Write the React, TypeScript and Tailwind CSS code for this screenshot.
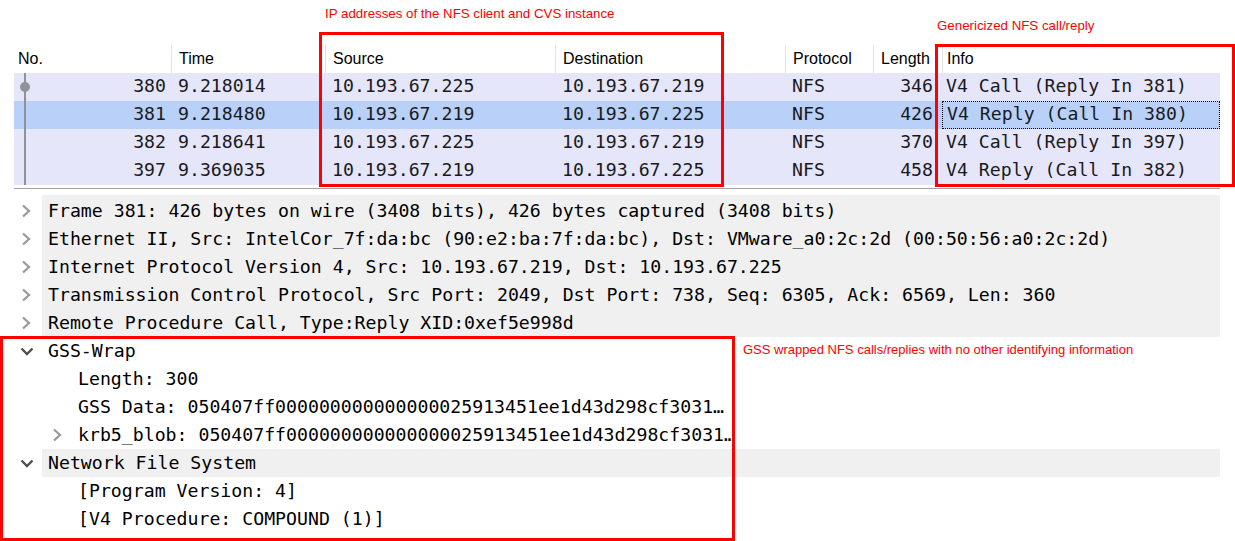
import React from "react";

type Pkt = {
  no: number;
  time: string;
  src: string;
  dst: string;
  proto: string;
  len: number;
  info: string;
  selected?: boolean;
};

const packets: Pkt[] = [
  { no: 380, time: "9.218014", src: "10.193.67.225", dst: "10.193.67.219", proto: "NFS", len: 346, info: "V4 Call (Reply In 381)" },
  { no: 381, time: "9.218480", src: "10.193.67.219", dst: "10.193.67.225", proto: "NFS", len: 426, info: "V4 Reply (Call In 380)", selected: true },
  { no: 382, time: "9.218641", src: "10.193.67.225", dst: "10.193.67.219", proto: "NFS", len: 370, info: "V4 Call (Reply In 397)" },
  { no: 397, time: "9.369035", src: "10.193.67.219", dst: "10.193.67.225", proto: "NFS", len: 458, info: "V4 Reply (Call In 382)" },
];

const GRID = "grid grid-cols-[157px_154px_230px_230px_88px_69px_278px]";

function Collapsed() {
  return (
    <svg width="10" height="14" viewBox="0 0 10 14" className="block">
      <polyline points="2,1.5 8,7 2,12.5" fill="none" stroke="#9a9a9a" strokeWidth="2.3" />
    </svg>
  );
}

function Expanded() {
  return (
    <svg width="14" height="9" viewBox="0 0 14 9" className="block">
      <polyline points="1.5,1.5 7,7 12.5,1.5" fill="none" stroke="#4f4f4f" strokeWidth="2.4" />
    </svg>
  );
}

type Det = {
  text: string;
  level: 0 | 1;
  state?: "open" | "closed";
  gray?: boolean;
  first?: boolean;
};

const details: Det[] = [
  { text: "Frame 381: 426 bytes on wire (3408 bits), 426 bytes captured (3408 bits)", level: 0, state: "closed", gray: true, first: true },
  { text: "Ethernet II, Src: IntelCor_7f:da:bc (90:e2:ba:7f:da:bc), Dst: VMware_a0:2c:2d (00:50:56:a0:2c:2d)", level: 0, state: "closed", gray: true },
  { text: "Internet Protocol Version 4, Src: 10.193.67.219, Dst: 10.193.67.225", level: 0, state: "closed", gray: true },
  { text: "Transmission Control Protocol, Src Port: 2049, Dst Port: 738, Seq: 6305, Ack: 6569, Len: 360", level: 0, state: "closed", gray: true },
  { text: "Remote Procedure Call, Type:Reply XID:0xef5e998d", level: 0, state: "closed", gray: true },
  { text: "GSS-Wrap", level: 0, state: "open" },
  { text: "Length: 300", level: 1 },
  { text: "GSS Data: 050407ff000000000000000025913451ee1d43d298cf3031…", level: 1 },
  { text: "krb5_blob: 050407ff000000000000000025913451ee1d43d298cf3031…", level: 1, state: "closed" },
  { text: "Network File System", level: 0, state: "open", gray: true },
  { text: "[Program Version: 4]", level: 1 },
  { text: "[V4 Procedure: COMPOUND (1)]", level: 1 },
];

export default function App() {
  return (
    <div className="relative w-[1235px] h-[541px] overflow-hidden bg-white font-['Liberation_Sans',Arial,sans-serif]">
      {/* top annotation space */}
      <div className="h-[43px]" />

      {/* packet list */}
      <div className="ml-[14px] w-[1206px]">
        <div className={`${GRID} h-[30px] pt-[2px] text-[16px] text-black`}>
          <div className="h-[28px] flex items-center pl-[4px]">No.</div>
          <div className="h-[28px] flex items-center pl-[7px] border-l border-[#e3e3e3]">Time</div>
          <div className="h-[28px] flex items-center pl-[7px] border-l border-[#e3e3e3]">Source</div>
          <div className="h-[28px] flex items-center pl-[7px] border-l border-[#e3e3e3]">Destination</div>
          <div className="h-[28px] flex items-center pl-[7px] border-l border-[#e3e3e3]">Protocol</div>
          <div className="h-[28px] flex items-center pl-[7px] border-l border-[#e3e3e3]">Length</div>
          <div className="h-[28px] flex items-center pl-[4px] border-l border-[#e3e3e3]">Info</div>
        </div>
        <div className="font-['DejaVu_Sans_Mono','Liberation_Mono',monospace] text-[18.2px] text-[#1a1a1a]">
          {packets.map((p, i) => (
            <div
              key={p.no}
              className={`${GRID} h-[28px] leading-[26px] whitespace-pre ${p.selected ? "bg-[#b9d1f8]" : "bg-[#e6e6fa]"}`}
            >
              <div className="relative text-right pr-[5px]">
                <span className="absolute left-[10px] top-0 h-[28px] w-[2px] bg-[#8e9399]" />
                {i === 0 && (
                  <span className="absolute left-[6px] top-[9px] w-[10px] h-[10px] rounded-full bg-[#8e9399]" />
                )}
                {p.no}
              </div>
              <div className="pl-[7px]">{p.time}</div>
              <div className="pl-[7px]">{p.src}</div>
              <div className="pl-[7px]">{p.dst}</div>
              <div className="pl-[7px]">{p.proto}</div>
              <div className="text-right pr-[9px]">{p.len}</div>
              <div className={`pl-[4px] ${p.selected ? "border border-dotted border-black leading-[24px] pl-[3px]" : ""}`}>
                {p.info}
              </div>
            </div>
          ))}
        </div>
        {/* splitter */}
        <div className="h-[3px]" />
        <div className="h-px bg-[#a3a3a3]" />
        <div className="h-[6px]" />
      </div>

      {/* packet details */}
      <div className="ml-[14px] w-[1206px] font-['DejaVu_Sans_Mono','Liberation_Mono',monospace] text-[18.2px] text-black">
        {details.map((d, i) => (
          <div key={i} className={`flex ${d.first ? "h-[30px]" : "h-[28px]"}`}>
            <div className={`w-[28px] flex items-center ${d.first ? "pt-[2px]" : ""} ${d.state === "open" ? "pl-[6px]" : "pl-[7px]"}`}>
              {d.level === 0 && d.state === "closed" && <Collapsed />}
              {d.level === 0 && d.state === "open" && <Expanded />}
            </div>
            <div
              className={`flex-1 flex items-center whitespace-pre ${d.first ? "pt-[2px]" : ""} ${d.gray ? "bg-[#f0f0f0]" : ""} ${d.level === 0 ? "pl-[6px]" : "pl-[10px]"}`}
            >
              {d.level === 1 && (
                <span className="w-[26px] flex items-center">
                  {d.state === "closed" ? <Collapsed /> : null}
                </span>
              )}
              {d.text}
            </div>
          </div>
        ))}
      </div>

      {/* annotations overlay */}
      <div className="absolute left-[319px] top-[32px] w-[405px] h-[155px] border-[3px] border-[#ff0000]" />
      <div className="absolute left-[935px] top-[44px] w-[300px] h-[143px] border-[3px] border-[#ff0000]" />
      <div className="absolute left-0 top-[336px] w-[735px] h-[205px] border-[3px] border-[#ff0000]" />

      <div className="absolute left-[325px] top-[6px] text-[13.3px] leading-[16px] text-[#ff0000]">
        IP addresses of the NFS client and CVS instance
      </div>
      <div className="absolute left-[937px] top-[18px] text-[13.3px] leading-[16px] text-[#ff0000]">
        Genericized NFS call/reply
      </div>
      <div className="absolute left-[743px] top-[342px] text-[13px] leading-[16px] text-[#ff0000]">
        GSS wrapped NFS calls/replies with no other identifying information
      </div>
    </div>
  );
}
